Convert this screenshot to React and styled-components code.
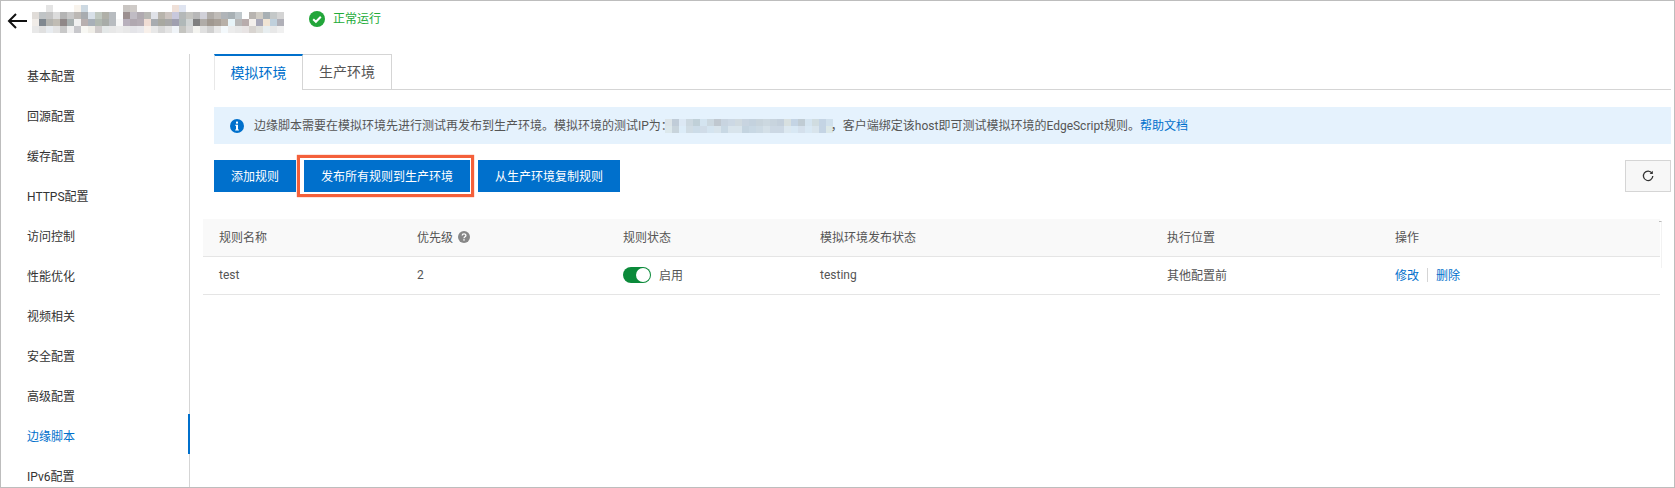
import React from 'react';
import styled, { createGlobalStyle } from 'styled-components';

const GlobalStyle = createGlobalStyle`
  html, body {
    margin: 0;
    padding: 0;
    background: #fff;
  }
  * {
    box-sizing: border-box;
  }
`;

const Page = styled.div`
  width: 1675px;
  height: 488px;
  overflow: hidden;
  display: flex;
  flex-direction: column;
  border: 1px solid #bdbdbd;
  font-family: "Roboto", "Noto Sans CJK SC", sans-serif;
  font-size: 12px;
  color: #333;
`;

const Header = styled.header`
  height: 53px;
  flex: none;
  display: flex;
  align-items: flex-start;
  padding: 4px 0 0 6px;
`;

const BackIcon = styled.svg`
  display: block;
  margin-top: 8px;
`;

const Blurred = styled.svg`
  display: block;
  flex: none;
  margin-left: ${props => props.$left || 0}px;
  margin-right: ${props => props.$right || 0}px;
`;

const Status = styled.div`
  display: flex;
  align-items: center;
  gap: 8px;
  margin: 6px 0 0 25px;
  height: 16px;
  color: #22ac38;
  font-size: 12px;
`;

const StatusText = styled.span`
  margin-top: -3px;
`;

const Body = styled.div`
  flex: 1;
  display: flex;
  min-height: 0;
`;

const Sidebar = styled.nav`
  width: 189px;
  flex: none;
  border-right: 1px solid #d5d5d5;
`;

const NavItem = styled.div`
  height: 40px;
  display: flex;
  align-items: center;
  padding: 2px 0 0 26px;
  font-size: 12px;
  color: ${props => (props.$active ? '#0070cc' : '#333')};
  margin-right: -1px;
  border-right: 2px solid ${props => (props.$active ? '#0070cc' : 'transparent')};
`;

const Main = styled.main`
  flex: 1;
  min-width: 0;
  padding-right: 3px;
`;

const Tabs = styled.div`
  display: flex;
  height: 36px;
  margin-left: 24px;
  border-bottom: 1px solid #d5d5d5;
`;

const Tab = styled.div`
  width: 89px;
  height: ${props => (props.$active ? '36px' : '35px')};
  display: flex;
  align-items: center;
  justify-content: center;
  padding-bottom: 2px;
  font-size: 14px;
  background: #fff;
  color: ${props => (props.$active ? '#0070cc' : '#555')};
  border-top: ${props => (props.$active ? '2px solid #0070cc' : '1px solid #d5d5d5')};
  border-right: 1px solid #d5d5d5;
  border-left: ${props => (props.$active ? '1px solid #e8e8e8' : 'none')};
`;

const Notice = styled.div`
  height: 37px;
  margin: 17px 0 0 24px;
  padding-left: 16px;
  display: flex;
  align-items: center;
  background: #e5f2fd;
  font-size: 12px;
  color: #555;
  white-space: nowrap;
`;

const NoticeIcon = styled.svg`
  flex: none;
  margin-right: 10px;
`;

const NoticeText = styled.span`
  margin-top: -2px;
`;

const HelpLink = styled.a`
  color: #0070cc;
`;

const Actions = styled.div`
  display: flex;
  align-items: center;
  gap: 8px;
  margin: 16px 0 0 24px;
`;

const Button = styled.button`
  height: 32px;
  width: ${props => props.$width}px;
  padding: 0 0 2px;
  border: none;
  background: #0070cc;
  color: #fff;
  font-family: inherit;
  font-size: 12px;
`;

const Highlight = styled.div`
  position: relative;
  display: flex;

  &::after {
    content: '';
    position: absolute;
    top: -5px;
    bottom: -5px;
    left: -7px;
    right: -4px;
    border: 3px solid #f4603a;
    box-shadow: 0 0 1px #f4603a;
    pointer-events: none;
  }
`;

const Refresh = styled.button`
  width: 46px;
  height: 32px;
  margin-left: auto;
  display: flex;
  align-items: center;
  justify-content: center;
  padding: 0;
  border: 1px solid #d5d5d5;
  background: #f7f7f7;
`;

const Table = styled.div`
  position: relative;
  margin: 27px 11px 0 13px;

  &::after {
    content: '';
    position: absolute;
    top: 2px;
    right: -2px;
    width: 2px;
    height: 46px;
    border-right: 1px solid #f2f2f2;
    border-top: 1px solid #bbb;
  }
`;

const Row = styled.div`
  display: grid;
  grid-template-columns: 198px 206px 197px 347px 228px 1fr;
  align-items: center;
  padding: 0 0 2px 16px;
  height: 38px;
  background: ${props => (props.$head ? '#f9f9f9' : '#fff')};
  border-bottom: 1px solid #e5e5e5;
  font-size: 12px;
  color: #555;
`;

const Cell = styled.div`
  display: flex;
  align-items: center;
  gap: ${props => props.$gap || 0}px;
`;

const Toggle = styled.span`
  width: 28px;
  height: 16px;
  border-radius: 8px;
  background: #0b8a3a;
  display: inline-flex;
  justify-content: flex-end;
  align-items: center;
  padding-right: 1px;

  &::after {
    content: '';
    width: 14px;
    height: 14px;
    border-radius: 50%;
    background: #fff;
  }
`;

const Op = styled.a`
  color: #0070cc;
`;

const OpDivider = styled.span`
  width: 1px;
  height: 14px;
  background: #d5d5d5;
  margin: 0 8px;
`;

// the blurred out strings of the screenshot, cell by cell
const titleCells = [
  [null, null, '#e4e4e4', null, null, null, '#f8f3ec', '#cdd9e2', null, null, null, null, null, '#c9c5c2', '#cfcbc8', null, null, null, null, null, '#efe0d8', '#dfe4f0', null, null, null, null, null, null, null, null, null, null, null, null, null, null],
  ['#e0dcd8', '#c0c4c6', '#c4c4c4', '#dcdcdc', '#b4b4b4', '#c8c8c8', '#bcb8b4', '#a8acb0', '#d8e0e8', '#c0c8c0', '#b0b0a8', '#b8bcc0', null, '#9c9090', '#c0bcc4', '#b0aab0', '#b8b8b4', '#e0e2e8', '#b8b4ac', '#ccc4c0', '#c8c8dc', '#b4b8b8', '#c4c4c0', '#b8b8b8', '#d0d0d8', '#b0aca8', '#c0bcb8', '#b0b4b8', '#a8b0b4', '#c0c8cc', null, '#b8b4b0', '#d0ccc4', '#a8b0b4', '#c4c8c8', '#d4d4d4'],
  ['#f0ece8', '#808890', '#b4b4b0', '#c0bcb4', '#908888', '#a8b0b0', '#f0f0f0', '#b8b0b0', '#a8b0b8', '#b0b8b0', '#a8aca8', '#b8bcc0', '#f8f8f8', '#b8b0bc', '#b0a8b0', '#b4acb4', '#f0ddd4', '#a8acb0', '#a8a8a0', '#a8a8a8', '#a0a0b0', '#b0b8b8', '#d0d4d4', '#808080', '#b0aca8', '#a09890', '#a8a098', '#b8b0a8', '#e8f4f8', '#b8b8b8', '#b8acac', '#f4f0ec', '#a8a8b8', '#f0e4d4', '#c0d0dc', '#b0b0b8'],
  ['#e8e8e8', '#e0e0e0', '#e8ecf0', '#e4e4e4', '#c8c8c8', '#f0f0f0', '#c8c8cc', '#f8f8f4', '#f0eee8', '#d0cccc', '#e4e8e8', '#e8e8e8', '#ececec', '#e8e8e8', '#e4e4e8', '#e8e8ec', '#f8f0ea', '#e8e8e8', '#d8d8d8', '#e4e4e4', '#f0f4f8', '#c4c4c0', '#d8d8d8', '#f4f4f0', '#e0e0e0', '#d0d0d0', '#e8e8e8', '#f4f9fc', '#ececec', '#e8e8e8', '#e8e4e4', '#d8d4d0', '#e0e0dc', '#e8eef0', '#e8e8e8', '#f0f0f0'],
];

const ipCells = [
  ['#dce4e8', '#c0ccd8', '#dce8f4', '#ccd8e0', '#c0d0d8', '#d4e4f0', '#ccd8e0', '#c0c8d0', '#c8d4e0', '#ccd8e4', '#d0dae0', '#c8d4e0', '#c4d2de', '#c8d4dc', '#ccd8e0', '#c8d4de', '#c4d0dc', '#d8e0e0', '#c4d4e4', '#c0ccd4', '#d4e4f0', '#d0dce0', '#c4d4e4', '#d0e0ec'],
  ['#dce8ec', '#c8d4dc', '#dcecf8', '#d0dce4', '#ccdce8', '#d0dce8', '#d4e4f0', '#d8e4ec', '#c8d8e4', '#d8e4ec', '#d8e4ec', '#c4d4e0', '#c8d8e4', '#ccdae4', '#d4e0e8', '#ccd8e4', '#ccd8e4', '#dce8f0', '#d8e8f4', '#d4e0ec', '#d8e8f4', '#d8e4ec', '#c4d4e4', '#dce8e8'],
];

function Mosaic({ cells, left, right }) {
  const width = cells[0].length * 7;
  const height = cells.length * 7;
  return (
    <Blurred $left={left} $right={right} width={width} height={height} viewBox={`0 0 ${width} ${height}`}>
      {cells.map((row, y) =>
        row.map((fill, x) =>
          fill ? <rect key={`${x}-${y}`} x={x * 7} y={y * 7} width="7" height="7" fill={fill} /> : null
        )
      )}
    </Blurred>
  );
}

const CheckIcon = () => (
  <svg width="16" height="16" viewBox="0 0 16 16">
    <circle cx="8" cy="8" r="8" fill="#22a63a" />
    <path d="M4.2 8.2l2.7 2.6 4.9-5" fill="none" stroke="#fff" strokeWidth="2" />
  </svg>
);

const InfoIcon = () => (
  <NoticeIcon width="14" height="14" viewBox="0 0 14 14">
    <circle cx="7" cy="7" r="7" fill="#0070cc" />
    <rect x="6" y="2.6" width="2" height="2" fill="#fff" />
    <path d="M5.2 5.8H8v4.6h.9v1H5.2v-1H6V6.8h-.8z" fill="#fff" />
  </NoticeIcon>
);

const HelpIcon = () => (
  <svg width="12" height="12" viewBox="0 0 12 12">
    <circle cx="6" cy="6" r="6" fill="#888" />
    <path d="M4.2 4.6c0-2.3 3.7-2.3 3.7-.1 0 1.3-1.9 1.3-1.9 2.8" fill="none" stroke="#fff" strokeWidth="1.3" />
    <rect x="5.3" y="8.2" width="1.4" height="1.4" fill="#fff" />
  </svg>
);

const navItems = ['基本配置', '回源配置', '缓存配置', 'HTTPS配置', '访问控制', '性能优化', '视频相关', '安全配置', '高级配置', '边缘脚本', 'IPv6配置'];

export default function App() {
  return (
    <>
      <GlobalStyle />
      <Page>
        <Header>
          <BackIcon width="20" height="16" viewBox="0 0 20 16">
            <path d="M20 8H2M9 1L2 8l7 7" fill="none" stroke="#111" strokeWidth="2" />
          </BackIcon>
          <Mosaic cells={titleCells} left={5} />
          <Status>
            <CheckIcon />
            <StatusText>正常运行</StatusText>
          </Status>
        </Header>
        <Body>
          <Sidebar>
            {navItems.map(item => (
              <NavItem key={item} $active={item === '边缘脚本'}>
                {item}
              </NavItem>
            ))}
          </Sidebar>
          <Main>
            <Tabs>
              <Tab $active>模拟环境</Tab>
              <Tab>生产环境</Tab>
            </Tabs>
            <Notice>
              <InfoIcon />
              <NoticeText>边缘脚本需要在模拟环境先进行测试再发布到生产环境。模拟环境的测试IP为：</NoticeText>
              <Mosaic cells={ipCells} left={-8} right={-2} />
              <NoticeText>，客户端绑定该host即可测试模拟环境的EdgeScript规则。<HelpLink>帮助文档</HelpLink></NoticeText>
            </Notice>
            <Actions>
              <Button $width={82}>添加规则</Button>
              <Highlight>
                <Button $width={166}>发布所有规则到生产环境</Button>
              </Highlight>
              <Button $width={142}>从生产环境复制规则</Button>
              <Refresh>
                <svg width="12" height="12" viewBox="0 0 12 12">
                  <path d="M10 3.2A4.7 4.7 0 1 0 10.8 6" fill="none" stroke="#333" strokeWidth="1.3" />
                  <path d="M10.8 0.8v3.2H7.6z" fill="#333" />
                </svg>
              </Refresh>
            </Actions>
            <Table>
              <Row $head>
                <Cell>规则名称</Cell>
                <Cell $gap={5}>优先级<HelpIcon /></Cell>
                <Cell>规则状态</Cell>
                <Cell>模拟环境发布状态</Cell>
                <Cell>执行位置</Cell>
                <Cell>操作</Cell>
              </Row>
              <Row>
                <Cell>test</Cell>
                <Cell>2</Cell>
                <Cell $gap={8}><Toggle />启用</Cell>
                <Cell>testing</Cell>
                <Cell>其他配置前</Cell>
                <Cell><Op>修改</Op><OpDivider /><Op>删除</Op></Cell>
              </Row>
            </Table>
          </Main>
        </Body>
      </Page>
    </>
  );
}
